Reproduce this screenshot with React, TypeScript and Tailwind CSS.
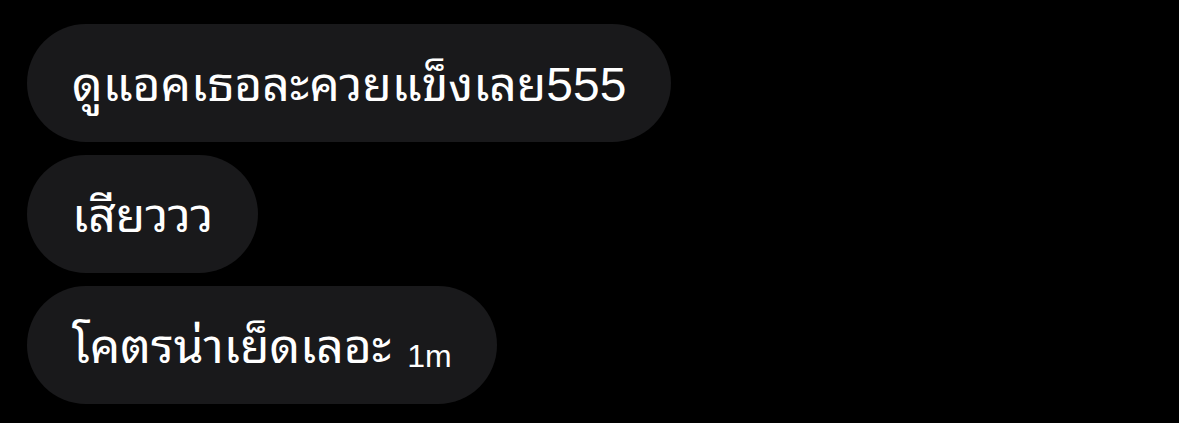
const messages = [
  { id: 1, text: 'ดูแอคเธอละควยแข็งเลย555' },
  { id: 2, text: 'เสียววว' },
  { id: 3, text: 'โคตรน่าเย็ดเลอะ', time: '1m' },
];

const App = () => {
  return (
    <div
      className="w-[1179px] h-[423px] bg-black pt-[24px] pl-[27px] flex flex-col items-start gap-[13px]"
      style={{ fontFamily: '"Liberation Sans", "Noto Sans Thai Looped", Loma, Garuda, "Noto Sans Thai", "Noto Sans", sans-serif' }}
    >
      {messages.map((m) => (
        <div
          key={m.id}
          className="h-[118px] rounded-full bg-[#19191b] px-[45px] flex items-center text-white"
        >
          <span className="text-[48px] leading-none mt-[4px]">{m.text}</span>
          {m.time && (
            <span className="ml-[16px] mt-[22px] text-[32px] leading-none text-white">{m.time}</span>
          )}
        </div>
      ))}
    </div>
  );
};

export default App;
